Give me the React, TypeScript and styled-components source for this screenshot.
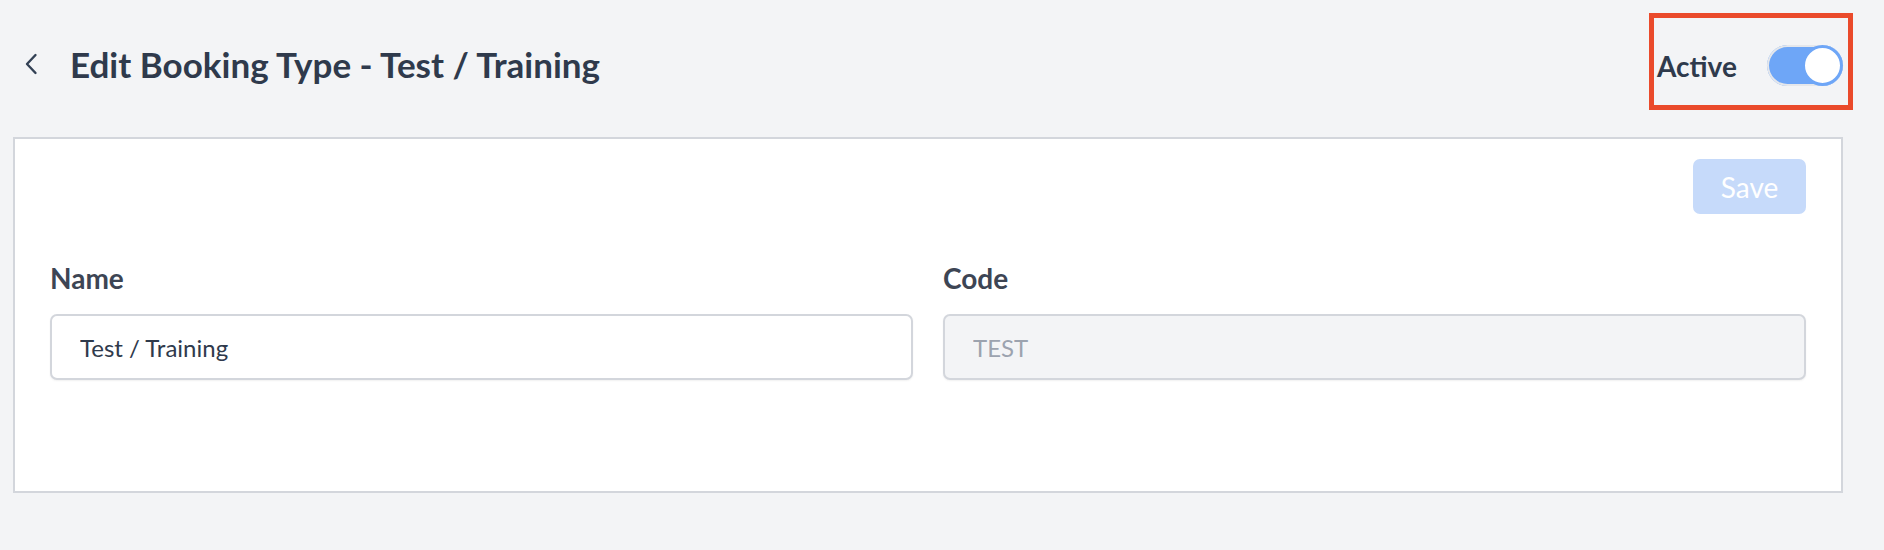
import styled, { createGlobalStyle } from "styled-components";

const GlobalStyle = createGlobalStyle`
  body {
    margin: 0;
    background: #f3f4f6;
    font-family: Lato, "Open Sans", sans-serif;
  }
  * {
    box-sizing: border-box;
  }
`;

const Page = styled.div`
  padding: 13px 41px 40px 13px;
`;

const Header = styled.div`
  display: flex;
  align-items: center;
  justify-content: space-between;
  margin-right: -10px;
  margin-bottom: 27px;
`;

const TitleGroup = styled.div`
  display: flex;
  align-items: center;
  gap: 32px;
  padding-left: 11px;
  padding-top: 5px;
`;

const BackButton = styled.button`
  display: flex;
  align-items: center;
  justify-content: center;
  padding: 0;
  border: none;
  background: transparent;
  cursor: pointer;
  color: #334155;
`;

const Title = styled.h1`
  margin: 0;
  font-size: 35px;
  font-weight: 700;
  color: #2f3a4c;
  line-height: 40px;
`;

const ActiveBox = styled.div`
  display: flex;
  align-items: center;
  gap: 30px;
  width: 204px;
  height: 97px;
  border: 5px solid #ea4a2b;
  padding: 8px 5px 0 3px;
`;

const ActiveLabel = styled.span`
  font-size: 28px;
  font-weight: 700;
  color: #2f3a4c;
`;

const Toggle = styled.button<{ $on: boolean }>`
  position: relative;
  width: 76px;
  height: 41px;
  padding: 0;
  border: none;
  border-radius: 21px;
  background: ${(p) => (p.$on ? "#6ea6f7" : "#d1d5db")};
  box-shadow: inset 0 0 0 2px #e5e7eb;
  cursor: pointer;
`;

const Knob = styled.span<{ $on: boolean }>`
  position: absolute;
  top: 0;
  ${(p) => (p.$on ? "right: 0;" : "left: 0;")}
  width: 41px;
  height: 41px;
  border-radius: 50%;
  background: #ffffff;
  border: 3px solid #6ea6f7;
`;

const Card = styled.div`
  display: flex;
  flex-direction: column;
  background: #ffffff;
  border: 2px solid #d3d6dc;
  padding: 20px 35px 111px 35px;
`;

const SaveButton = styled.button`
  align-self: flex-end;
  width: 113px;
  height: 55px;
  border: none;
  border-radius: 7px;
  background: #c6dafa;
  color: #ffffff;
  font-family: Lato, sans-serif;
  font-size: 28px;
  cursor: not-allowed;
`;

const FieldGrid = styled.div`
  display: grid;
  grid-template-columns: 1fr 1fr;
  gap: 30px;
  margin-top: 47px;
`;

const Field = styled.div`
  display: flex;
  flex-direction: column;
`;

const Label = styled.label`
  font-size: 28px;
  font-weight: 700;
  line-height: 34px;
  color: #3d4554;
  margin-bottom: 19px;
`;

const Input = styled.input<{ $disabled?: boolean }>`
  height: 66px;
  width: 100%;
  border: 2px solid #d3d6dc;
  border-radius: 7px;
  padding: 0 28px;
  font-family: Lato, sans-serif;
  font-size: 24px;
  color: ${(p) => (p.$disabled ? "#9ca3af" : "#2f3a4c")};
  background: ${(p) => (p.$disabled ? "#f3f4f6" : "#ffffff")};
  box-shadow: 0 1px 2px rgba(0, 0, 0, 0.06);
  outline: none;
`;

const App = () => {
  return (
    <Page>
      <GlobalStyle />
      <Header>
        <TitleGroup>
          <BackButton aria-label="Back">
            <svg width="14" height="22" viewBox="0 0 14 22" fill="none">
              <path
                d="M11.5 2 L3 11 L11.5 20"
                stroke="currentColor"
                strokeWidth="2.4"
                strokeLinecap="round"
                strokeLinejoin="round"
              />
            </svg>
          </BackButton>
          <Title>Edit Booking Type - Test / Training</Title>
        </TitleGroup>
        <ActiveBox>
          <ActiveLabel>Active</ActiveLabel>
          <Toggle $on={true} aria-label="Active">
            <Knob $on={true} />
          </Toggle>
        </ActiveBox>
      </Header>
      <Card>
        <SaveButton disabled>Save</SaveButton>
        <FieldGrid>
          <Field>
            <Label>Name</Label>
            <Input type="text" defaultValue="Test / Training" />
          </Field>
          <Field>
            <Label>Code</Label>
            <Input type="text" value="TEST" readOnly $disabled />
          </Field>
        </FieldGrid>
      </Card>
    </Page>
  );
};

export default App;
